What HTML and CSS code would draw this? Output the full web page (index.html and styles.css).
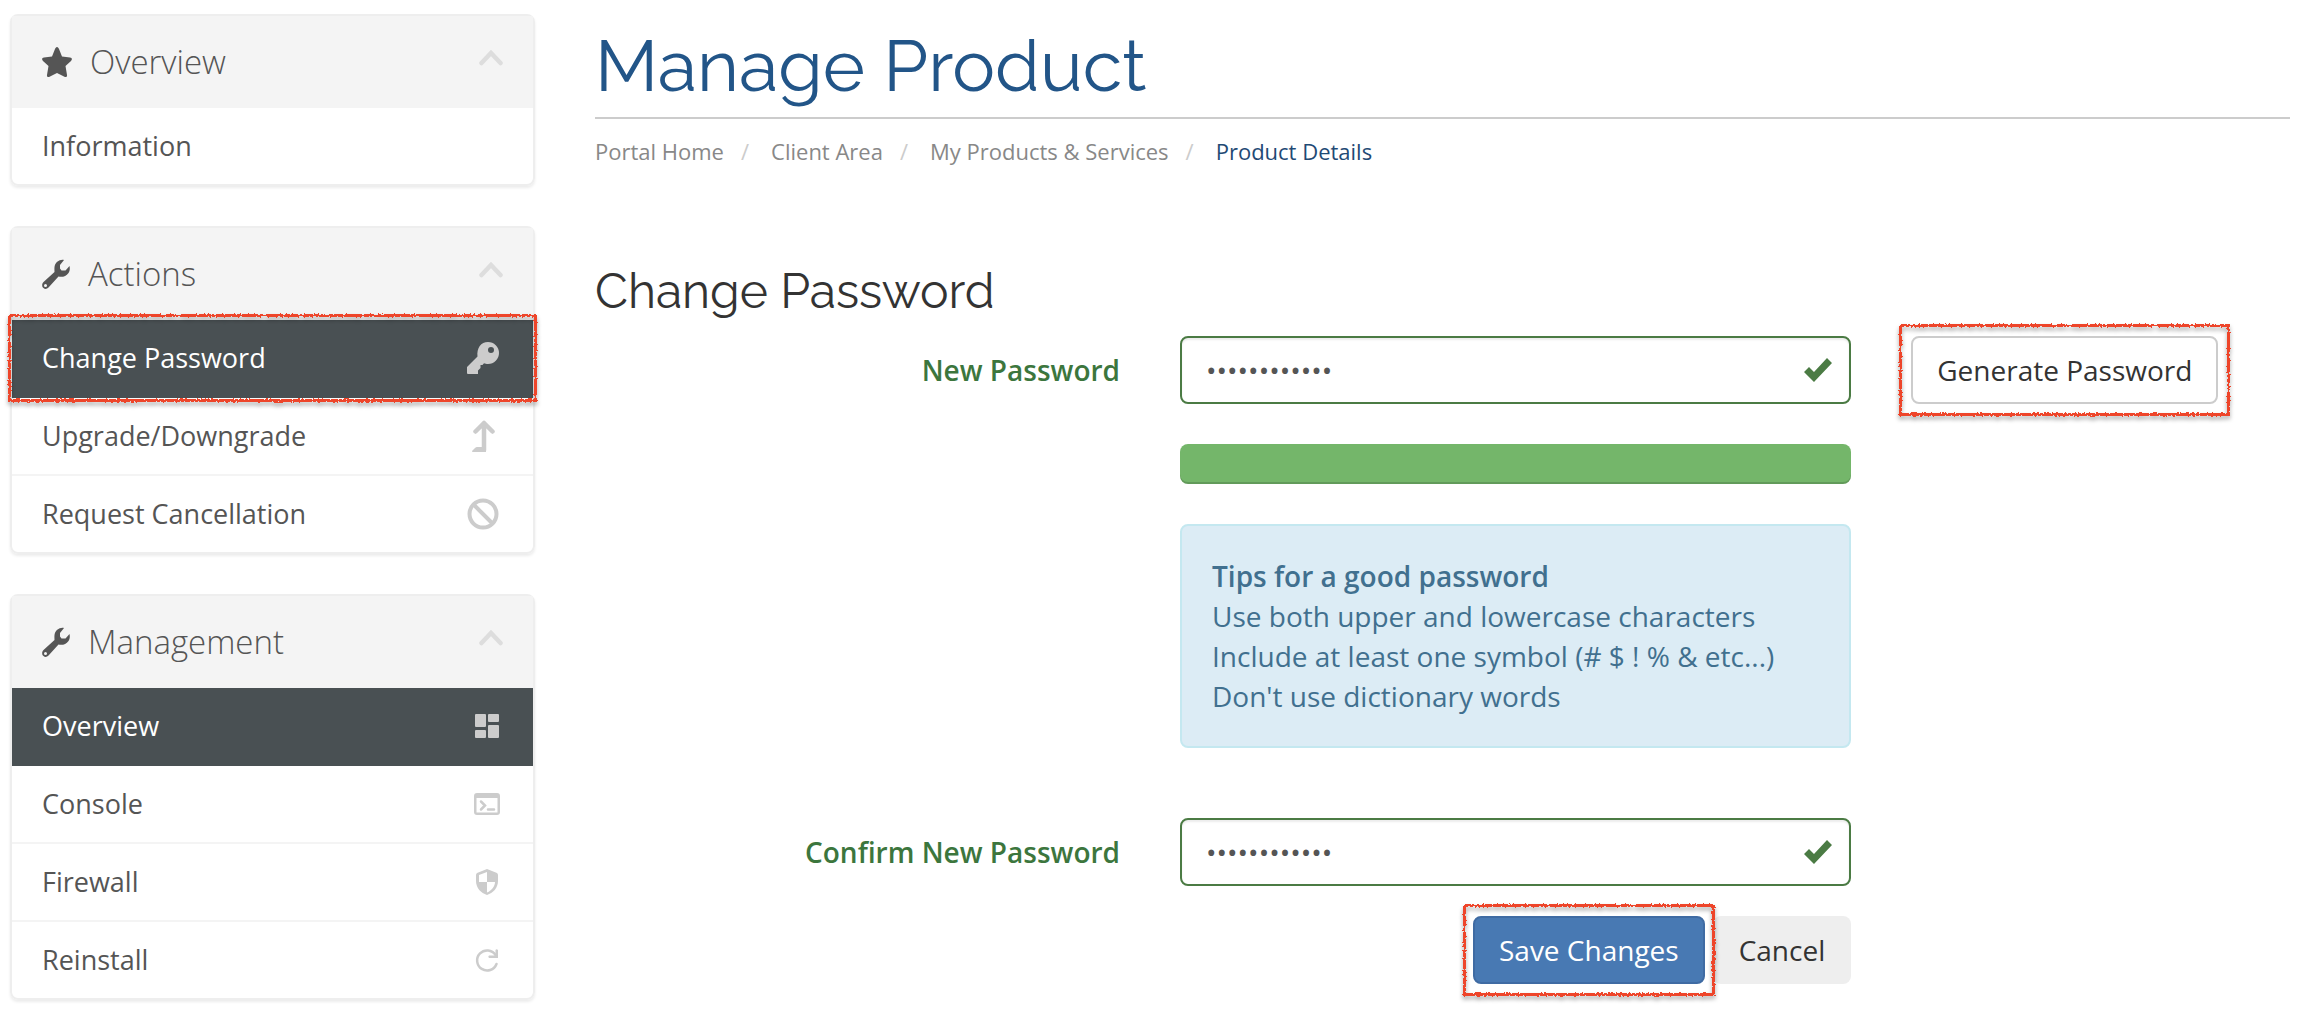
FILE: index.html
```
<!DOCTYPE html>

<html lang="en">
<head>
<meta charset="UTF-8">
<meta name="viewport" content="width=device-width, initial-scale=1.0">
<title>Manage Product</title>

<link rel="stylesheet" href="styles.css">

</head>

<body>

<!-- hand drawn edge for the highlight boxes, icons used more than once -->

<svg class="defs" aria-hidden="true">
    <filter id="rough" x="-5%" y="-10%" width="110%" height="120%">
        <feTurbulence type="fractalNoise" baseFrequency="0.5" numOctaves="2" seed="4" result="noise"/>
        <feDisplacementMap in="SourceGraphic" in2="noise" scale="4"/>
    </filter>
    <symbol id="wrench" viewBox="0 0 28 30">
        <path fill-rule="evenodd" d="M22 1C18 0 13 3 12.500 8C12.300 10 12.500 12 12.500 13L1.500 23C-.5 25 0 28 1.500 29C3 30.500 5 30 6.500 28.500L16.500 17.500C20 18.500 24 17.500 26.500 14C28 12 28 9 27.500 7L23.500 11.500H19.500L18 9.500V6L22 1ZM3.500 25A1.500 1.500 0 1 1 3.500 28A1.500 1.500 0 1 1 3.500 25Z"/>
    </symbol>
    <symbol id="chevron" viewBox="0 0 24 16">
        <path d="M2.500 13L12 3L21.500 13" fill="none" stroke="currentColor" stroke-width="4.500" stroke-linecap="round"/>
    </symbol>
    <symbol id="check" viewBox="0 0 28 24">
        <path d="M0 14L5 9L10 14L23 0L28 5L10 24Z"/>
    </symbol>
</svg>

<div class="page">

    <!-- SIDEBAR -->

    <aside class="sidebar">

        <section class="panel">
            <h3 class="panel-title">
                <svg class="title-icon star" viewBox="0 0 30 30"><path d="M15 0C16 0 16.500 1 17 2L20 9.500L28 10.500C30 10.800 30.500 12.500 29 14L23.500 19L25 28C25.300 30 24 30.500 22.500 29.700L15 26L7.500 29.700C6 30.500 4.700 30 5 28L6.500 19L1 14C-.5 12.500 0 10.800 2 10.500L10 9.500L13 2C13.500 1 14 0 15 0Z"/></svg>
                Overview
                <svg class="chevron"><use href="#chevron"/></svg>
            </h3>
            <a class="item" href="#">Information</a>
        </section>

        <section class="panel">
            <h3 class="panel-title">
                <svg class="title-icon"><use href="#wrench"/></svg>
                Actions
                <svg class="chevron"><use href="#chevron"/></svg>
            </h3>
            <a class="item active marked" href="#">
                Change Password
                <svg class="item-icon large" viewBox="0 0 32 32"><path fill-rule="evenodd" d="M21 0A11 11 0 0 1 21 22C19.500 22 18 21.700 17 21.300L15.500 23H13.500V26L11 28.500V32H1Q0 32 0 31V25L10.500 14.500C9.500 6 14 0 21 0ZM24 5A3 3 0 1 0 24 11A3 3 0 1 0 24 5Z"/></svg>
            </a>
            <a class="item" href="#">
                Upgrade/Downgrade
                <svg class="item-icon large" viewBox="0 0 32 32"><path d="M17 3V30M8.500 11.500L17 3L25.500 11.500" fill="none" stroke="currentColor" stroke-width="4.500" stroke-linecap="round" stroke-linejoin="round"/><path d="M5.500 32Q4.500 31.500 5.500 30.500L8 28Q9 27 10 27H19V32Z"/></svg>
            </a>
            <a class="item" href="#">
                Request Cancellation
                <svg class="item-icon large" viewBox="0 0 32 32"><g fill="none" stroke="currentColor" stroke-width="4"><circle cx="16" cy="16" r="13.500"/><path d="M6.500 6.500L25.500 25.500"/></g></svg>
            </a>
        </section>

        <section class="panel">
            <h3 class="panel-title">
                <svg class="title-icon"><use href="#wrench"/></svg>
                Management
                <svg class="chevron"><use href="#chevron"/></svg>
            </h3>
            <a class="item active" href="#">
                Overview
                <svg class="item-icon" viewBox="0 0 28 28"><path d="M3 2H12Q13 2 13 3V14Q13 15 12 15H3Q2 15 2 14V3Q2 2 3 2ZM16 2H25Q26 2 26 3V9Q26 10 25 10H16Q15 10 15 9V3Q15 2 16 2ZM3 18H12Q13 18 13 19V25Q13 26 12 26H3Q2 26 2 25V19Q2 18 3 18ZM16 13H25Q26 13 26 14V25Q26 26 25 26H16Q15 26 15 25V14Q15 13 16 13Z"/></svg>
            </a>
            <a class="item" href="#">
                Console
                <svg class="item-icon" viewBox="0 0 28 28"><path fill-rule="evenodd" d="M4 3H24Q27 3 27 6V22Q27 25 24 25H4Q1 25 1 22V6Q1 3 4 3ZM3.500 8V22.500H24.500V8Z"/><path d="M8 11.500L12 15.500L8 19.500M15 19.500H21" fill="none" stroke="currentColor" stroke-width="2.500" stroke-linecap="round"/></svg>
            </a>
            <a class="item" href="#">
                Firewall
                <svg class="item-icon" viewBox="0 0 28 28"><path fill-rule="evenodd" d="M14 1L24 5Q25 6 25 7V13C25 20 20 25 14 27C8 25 3 20 3 13V7Q3 6 4 5ZM14 4L6 7V14H14V24.500C19 22.500 22 18 22 14H14Z"/></svg>
            </a>
            <a class="item" href="#">
                Reinstall
                <svg class="item-icon" viewBox="0 0 28 28"><path d="M23.500 18A10 10 0 1 1 22.500 9" fill="none" stroke="currentColor" stroke-width="2.500" stroke-linecap="round"/><path d="M22.500 4Q23.500 2.500 25 4V12H16Q14.500 10.500 16 9.500H22.500Z"/></svg>
            </a>
        </section>

    </aside>

    <!-- CONTENT -->

    <main class="content">

        <h1>Manage Product</h1>

        <ol class="breadcrumb">
            <li><a href="#">Portal Home</a></li>
            <li><a href="#">Client Area</a></li>
            <li><a href="#">My Products &amp; Services</a></li>
            <li class="current">Product Details</li>
        </ol>

        <h2>Change Password</h2>

        <form class="form">

            <label for="newPassword">New Password</label>
            <div class="field">
                <input type="password" id="newPassword" value="abcdefghijkl">
                <svg class="check"><use href="#check"/></svg>
            </div>
            <div class="side">
                <button type="button" class="btn btn-default marked">Generate Password</button>
            </div>

            <div class="strength"></div>

            <div class="tips">
                <strong>Tips for a good password</strong><br>
                Use both upper and lowercase characters<br>
                Include at least one symbol (# $ ! % &amp; etc...)<br>
                Don't use dictionary words
            </div>

            <label for="confirmPassword">Confirm New Password</label>
            <div class="field">
                <input type="password" id="confirmPassword" value="abcdefghijkl">
                <svg class="check"><use href="#check"/></svg>
            </div>

            <div class="actions">
                <button type="submit" class="btn btn-primary marked">Save Changes</button>
                <button type="reset" class="btn btn-cancel">Cancel</button>
            </div>

        </form>

    </main>

</div>

</body>
</html>
```
FILE: styles.css
```
*{
    margin:0;
    padding:0;
    box-sizing:border-box;
}

body{
    background:#fff;
    color:#333;
    font-family:"Open Sans",sans-serif;
    font-size:28px;
    line-height:40px;
}

a{
    color:inherit;
    text-decoration:none;
}

svg{
    display:block;
    fill:currentColor;
}

.defs{
    position:absolute;
    width:0;
    height:0;
}

.page{
    display:grid;
    grid-template-columns:repeat(12,minmax(0,1fr));
    column-gap:60px;
    padding:14px 22px 36px 10px;
}

/* SIDEBAR */

.sidebar{
    grid-column:span 3;
    display:flex;
    flex-direction:column;
    gap:40px;
}

.panel{
    border:2px solid #eee;
    border-radius:8px;
    box-shadow:0 2px 3px rgba(0,0,0,.08);
    color:#555;
}

.panel-title{
    display:flex;
    align-items:center;
    height:92px;
    padding:0 30px;
    background:#f4f4f4;
    font-size:33px;
    font-weight:300;
}

.title-icon{
    width:28px;
    height:30px;
    margin-right:18px;
}

.title-icon.star{
    width:30px;
}

.chevron{
    width:24px;
    height:16px;
    margin-left:auto;
    margin-bottom:8px;
    color:#ddd;
}

.item{
    display:flex;
    justify-content:space-between;
    align-items:center;
    height:78px;
    padding:0 32px 0 30px;
    border-bottom:2px solid #f4f4f4;
    font-size:27px;
}

.item:last-child{
    height:76px;
    border-bottom:none;
}

.item-icon{
    width:28px;
    height:28px;
    color:#ccc;
}

.item-icon.large{
    width:32px;
    height:32px;
    margin-right:2px;
}

.item.active{
    background:#495053;
    border-color:#495053;
    color:#fff;
}

/* HIGHLIGHT BOX */

.marked{
    position:relative;
}

.marked::after{
    content:"";
    position:absolute;
    inset:-14px;
    border:3px solid #ee452a;
    filter:url(#rough) drop-shadow(0 3px 2px rgba(0,0,0,.35));
    pointer-events:none;
}

.item.marked::after{
    inset:-6px -4px;
}

.btn-primary.marked::after{
    inset:-14px -12px;
}

/* CONTENT */

.content{
    grid-column:span 9;
}

h1,
h2{
    font-family:Raleway,Lato,sans-serif;
    font-weight:400;
}

h1{
    height:105px;
    border-bottom:2px solid #ccc;
    color:#225588;
    font-size:72px;
    line-height:104px;
}

.breadcrumb{
    display:flex;
    padding:12px 0;
    list-style:none;
    color:#888;
    font-size:22px;
}

.breadcrumb li + li::before{
    content:"/";
    padding:0 22px 0 17px;
    color:#ccc;
}

.breadcrumb .current{
    color:#1f4a75;
}

h2{
    margin-top:78px;
    font-size:48px;
    line-height:60px;
}

/* FORM */

.form{
    display:grid;
    grid-template-columns:repeat(12,minmax(0,1fr));
    column-gap:60px;
    margin-top:15px;
}

.form label{
    grid-column:1 / span 4;
    color:#3c763d;
    font-weight:600;
    line-height:68px;
    text-align:right;
}

.field{
    grid-column:5 / span 5;
    position:relative;
}

.field input{
    width:100%;
    height:68px;
    padding:0 24px;
    border:2px solid #4b7b44;
    border-radius:8px;
    box-shadow:inset 0 2px 2px rgba(0,0,0,.08);
    color:#555;
    font-family:inherit;
    font-size:28px;
    outline:none;
}

.check{
    position:absolute;
    top:22px;
    right:19px;
    width:28px;
    height:24px;
    color:#4b7b44;
}

.side{
    grid-column:10 / span 3;
}

.strength{
    grid-column:5 / span 5;
    height:40px;
    margin-top:40px;
    border-radius:8px;
    background:#74b66a;
    box-shadow:inset 0 -2px 0 rgba(0,0,0,.15);
}

.tips{
    grid-column:5 / span 5;
    margin:40px 0 70px;
    padding:30px;
    border:2px solid #c4e8f0;
    border-radius:8px;
    background:#dcecf5;
    color:#41708f;
}

.tips strong{
    font-weight:600;
}

.actions{
    grid-column:5 / span 5;
    display:flex;
    justify-content:flex-end;
    gap:8px;
    margin-top:30px;
}

.btn{
    height:68px;
    padding:0 24px;
    border:2px solid transparent;
    border-radius:8px;
    color:#333;
    font-family:inherit;
    font-size:28px;
    cursor:pointer;
}

.btn-default{
    border-color:#ccc;
    background:#fff;
}

.btn-primary{
    border-color:#3f6ba3;
    background:#4879b3;
    color:#fff;
}

.btn-cancel{
    background:#eee;
}
```
